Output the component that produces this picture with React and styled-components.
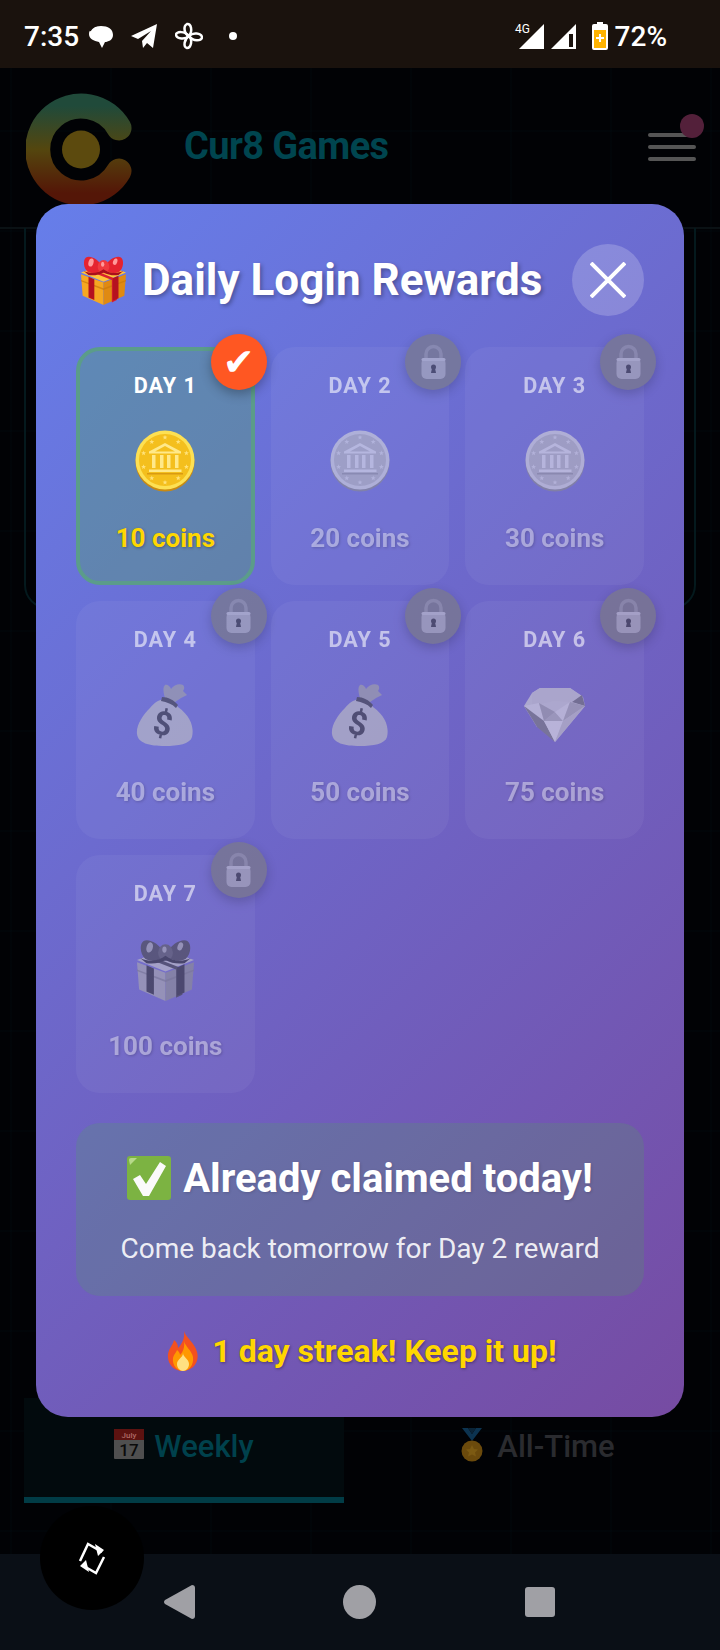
import React from 'react';
import styled, { createGlobalStyle } from 'styled-components';

const GlobalStyle = createGlobalStyle`
  html, body { margin: 0; padding: 0; background: #010204; }
  body { font-family: Roboto, "Liberation Sans", sans-serif; }
`;

const Screen = styled.div`
  position: relative;
  width: 720px;
  height: 1650px;
  overflow: hidden;
  display: flex;
  flex-direction: column;
  background-color: #010205;
  background-image:
    linear-gradient(rgba(0, 229, 255, 0.012) 2px, transparent 2px),
    linear-gradient(90deg, rgba(0, 229, 255, 0.012) 2px, transparent 2px);
  background-size: 100px 100px;
  background-position: 10px 30px;
`;

const StatusBar = styled.div`
  height: 68px;
  flex: none;
  box-sizing: border-box;
  display: flex;
  align-items: center;
  justify-content: space-between;
  padding: 4px 53px 0 24px;
  background: #1a120d;
  color: #fff;
  font-size: 28px;
  font-weight: 500;
`;

const StatusGroup = styled.div`
  display: flex;
  align-items: center;
`;

const Time = styled.span`
  width: 64px;
`;

const StatusIcon = styled.svg`
  display: block;
  margin-right: ${(p) => p.$gap || 0}px;
`;

const Percent = styled.span`
  margin-left: 7px;
`;

const NetworkBadge = styled.span`
  position: absolute;
  top: 22px;
  left: 515px;
  font-size: 12px;
  font-weight: 400;
`;

const Header = styled.header`
  height: 161px;
  flex: none;
  box-sizing: border-box;
  display: flex;
  align-items: center;
  padding: 0 24px 0 26px;
  border-bottom: 2px solid #0a1114;
`;

const Brand = styled.div`
  margin: -4px 0 0 46px;
  flex: 1;
  color: #00454f;
  font-size: 38px;
  font-weight: 700;
  letter-spacing: -0.6px;
`;

const Burger = styled.div`
  position: relative;
  width: 48px;
  display: flex;
  flex-direction: column;
  gap: 8px;
  margin-top: -2px;

  span {
    height: 4px;
    border-radius: 2px;
    background: #555;
  }
`;

const RedDot = styled.i`
  position: absolute;
  top: -19px;
  right: -8px;
  width: 24px;
  height: 24px;
  border-radius: 50%;
  background: #53203a;
`;

const HeroPanel = styled.div`
  height: 379px;
  flex: none;
  margin: -1px 24px 0;
  border: 2px solid #04191d;
  border-top: none;
  border-radius: 0 0 24px 24px;
`;

const Tabs = styled.div`
  margin: auto 24px 51px;
  display: grid;
  grid-template-columns: 320px 320px;
  gap: 32px;
  height: 105px;
`;

const Tab = styled.div`
  box-sizing: border-box;
  display: flex;
  align-items: flex-start;
  justify-content: center;
  gap: 10px;
  padding-top: 30px;
  font-size: 31px;
  font-weight: 500;
  color: ${(p) => (p.$active ? '#00414c' : '#2a2b2f')};
  background: ${(p) => (p.$active ? '#020a0d' : 'transparent')};
  border-bottom: ${(p) => (p.$active ? '6px solid #013c46' : 'none')};
`;

const NavBar = styled.nav`
  height: 96px;
  flex: none;
  display: grid;
  grid-template-columns: 164px 31px 148px 33px 149px 30px;
  align-items: center;
  background: #0a0f16;

  svg { grid-row: 1; }
`;

const FloatingButton = styled.button`
  position: absolute;
  left: 40px;
  top: 1506px;
  width: 104px;
  height: 104px;
  padding: 0;
  border: none;
  border-radius: 50%;
  background: #000;
  display: flex;
  align-items: center;
  justify-content: center;
`;

const Modal = styled.section`
  position: absolute;
  left: 36px;
  top: 204px;
  width: 648px;
  height: 1213px;
  box-sizing: border-box;
  padding: 40px;
  border-radius: 32px;
  background: linear-gradient(135deg, #667eea 0%, #764ba2 100%);
  color: #fff;
`;

const ModalHeader = styled.div`
  display: flex;
  align-items: center;
  justify-content: space-between;
  height: 72px;
  margin-bottom: 31px;
`;

const Title = styled.h2`
  margin: 0;
  display: flex;
  align-items: center;
  gap: 16px;
  padding-left: 5px;
  font-size: 44px;
  font-weight: 700;
  white-space: nowrap;
  text-shadow: 2px 2px 4px rgba(0, 0, 0, 0.3);
`;

const CloseButton = styled.button`
  width: 72px;
  height: 72px;
  padding: 0;
  border: none;
  border-radius: 50%;
  background: rgba(255, 255, 255, 0.2);
  display: flex;
  align-items: center;
  justify-content: center;
  flex: none;
`;

const Grid = styled.div`
  display: grid;
  grid-template-columns: repeat(3, 1fr);
  grid-auto-rows: 238px;
  gap: 16px;
`;

const Card = styled.div`
  position: relative;
  box-sizing: border-box;
  display: flex;
  flex-direction: column;
  align-items: center;
  padding-top: 22px;
  border: 4px solid ${(p) => (p.$claimed ? '#5b9c8a' : 'transparent')};
  border-radius: 24px;
  background: ${(p) => (p.$claimed ? 'rgba(76, 175, 80, 0.3)' : 'rgba(255, 255, 255, 0.08)')};
  opacity: ${(p) => (p.$claimed ? 1 : 0.6)};
`;

const DayLabel = styled.div`
  height: 26px;
  line-height: 26px;
  font-size: 21.6px;
  font-weight: 700;
  letter-spacing: 1px;
`;

const IconSlot = styled.div`
  height: 72px;
  margin-top: 26px;
  display: flex;
  align-items: center;
  justify-content: center;
  filter: ${(p) => (p.$locked ? 'grayscale(1)' : 'none')};
`;

const Coins = styled.div`
  height: 28px;
  margin-top: 27px;
  line-height: 28px;
  font-size: 26px;
  font-weight: 700;
  color: ${(p) => (p.$claimed ? '#ffd700' : 'rgba(255, 255, 255, 0.72)')};
  text-shadow: 1px 1px 3px rgba(0, 0, 0, 0.3);
`;

const Badge = styled.div`
  position: absolute;
  top: -17px;
  right: -16px;
  width: 56px;
  height: 56px;
  border-radius: 50%;
  display: flex;
  align-items: center;
  justify-content: center;
  background: ${(p) => (p.$claimed ? '#ff5722' : '#7d7d7d')};
  box-shadow: 0 4px 12px rgba(0, 0, 0, 0.3);
  color: #fff;
  font-family: "DejaVu Sans", sans-serif;
  font-size: 38px;
  font-weight: 700;
`;

const LockWrap = styled.span`
  display: flex;
  filter: grayscale(1);
  opacity: 0.75;
`;

const StatusBox = styled.div`
  box-sizing: border-box;
  height: 173px;
  margin-top: 30px;
  border-radius: 24px;
  background: rgba(76, 175, 80, 0.2);
  display: flex;
  flex-direction: column;
  align-items: center;
  padding-top: 27px;
`;

const StatusTitle = styled.div`
  display: flex;
  align-items: center;
  gap: 12px;
  height: 56px;
  font-size: 40px;
  font-weight: 700;
  text-shadow: 1px 1px 3px rgba(0, 0, 0, 0.15);
`;

const StatusText = styled.div`
  margin-top: 26px;
  font-size: 28px;
  line-height: 34px;
  color: rgba(255, 255, 255, 0.9);
`;

const Streak = styled.div`
  margin-top: 33px;
  display: flex;
  align-items: center;
  justify-content: center;
  gap: 13px;
  height: 44px;
  padding-left: 4px;
  font-size: 32px;
  font-weight: 700;
  color: #ffd700;
  text-shadow: 1px 1px 3px rgba(0, 0, 0, 0.35);
`;

function GiftIcon({ width = 57, height = 63 }) {
  return (
    <svg width={width} height={height} viewBox="5 1 54 60" preserveAspectRatio="none">
      <path d="M5 24 32 34v27L7 50z" fill="#f6a821" />
      <path d="M59 24 32 34v27l25-11z" fill="#e08a12" />
      <path d="M5 22 32 12l27 10-27 11z" fill="#ffc53d" />
      <path d="M5 31l27 10 27-10v1.500L32 43 5 32.500z" fill="#c9790c" opacity="0.7" />
      <path d="M14 20l6-1 28 11v25l-6 3V31z" fill="#d9202e" />
      <path d="M14 27l7 3v25l-7-3z" fill="#b5121f" />
      <path d="M50 26l-7 3v27l7-3z" fill="#b5121f" />
      <path d="M32 17C26 5 15 1 11 4 7 7 8 17 13 21c6 3 14 2 19-4z" fill="#e5232f" />
      <path d="M32 17c6-12 17-16 21-13 4 3 3 13-2 17-6 3-14 2-19-4z" fill="#e5232f" />
      <ellipse cx="32" cy="15" rx="7" ry="8" fill="#f03a3f" />
      <ellipse cx="17" cy="10" rx="3" ry="5" fill="#ff9a9a" transform="rotate(15 17 10)" />
      <ellipse cx="46" cy="9" rx="2.500" ry="4" fill="#ff9a9a" transform="rotate(20 46 9)" />
      <ellipse cx="31" cy="12" rx="2" ry="3" fill="#ff9a9a" />
      <path d="M8 20c8 4 18 3 24-2 6 5 16 6 24 2l-6 5c-6 1-13 0-18-3-5 3-12 4-18 3z" fill="#a90f1c" />
    </svg>
  );
}

function starPoints(cx, cy, r) {
  const pts = [];
  for (let i = 0; i < 10; i++) {
    const rad = i % 2 === 0 ? r : r * 0.42;
    const a = (i * Math.PI) / 5;
    pts.push(`${cx + rad * Math.sin(a)},${cy - rad * Math.cos(a)}`);
  }
  return pts.join(' ');
}

function CoinIcon() {
  const stars = [0, 36, 72, 108, 144, 180, 216, 252, 288, 324];
  return (
    <svg width="60" height="62" viewBox="0 0 60 62">
      <circle cx="30" cy="32" r="29.500" fill="#c98a12" />
      <circle cx="30" cy="30" r="29.500" fill="#fde053" />
      <circle cx="30" cy="30" r="26" fill="#f4bf1d" />
      {stars.map((a) => (
        <polygon
          key={a}
          points={starPoints(30 + 22.5 * Math.sin((a * Math.PI) / 180), 30 - 22.5 * Math.cos((a * Math.PI) / 180), 2.6)}
          fill="#ffe27a"
        />
      ))}
      <path d="M30 13 46 21.500v2H14v-2z" fill="#ffe98a" />
      <path d="M30 16 40 21.500H20z" fill="#f4bf1d" />
      <path d="M17 25h3.500v13H17zM25 25h3.500v13H25zM32 25h3.500v13H32zM40 25h3.500v13H40z" fill="#ffe98a" />
      <path d="M14 39.500h32.500v2.500H14z" fill="#ffe98a" />
      <path d="M12 43h36v1.500H12z" fill="#d99a12" />
    </svg>
  );
}

function BagIcon() {
  return (
    <svg width="58" height="64" viewBox="0 0 58 64">
      <path d="M30 18c-2-6-4-13-1-16 2-1 5 1 6 4 3-4 8-6 12-4 2 2 1 5 0 6l4 4-6 3-9 6z" fill="#d9a441" />
      <path d="M28 16c8 1 11 4 14 8C56 34 58 46 56 54c-2 7-14 9-27 9C13 63 2 60 1 51c-1-9 6-19 13-26 4-5 8-8 14-9z" fill="#f3c453" />
      <path d="M26 14c6 0 12 3 16 8l-2 3c-4-4-9-6-15-7z" fill="#5c4326" />
      <text x="27" y="52" textAnchor="middle" fontFamily="Roboto, sans-serif" fontWeight="700" fontSize="33" fill="#4d3b2a" transform="rotate(12 27 40)">$</text>
    </svg>
  );
}

function GemIcon() {
  return (
    <svg width="62" height="56" viewBox="0 0 62 56">
      <path d="M16 1h30l13 9 2 9-30 36L0 19l8-13z" fill="#d6d6d6" />
      <path d="M16 1h30l12 8-12 6-16-1-13 3-9 2L8 6z" fill="#d2d2d2" />
      <path d="M48 15l10-7 3 11z" fill="#777" />
      <path d="M0 19l15-3 5 18-7 6z" fill="#e4e4e4" />
      <path d="M0 19l13 21 18 15L20 34z" fill="#7f7f7f" />
      <path d="M20 34l11-9 8 9z" fill="#b8b8b8" />
      <path d="M15 16l16 9-11 9z" fill="#a9a9a9" />
      <path d="M31 25l15-10-7 19z" fill="#e4e4e4" />
      <path d="M46 15l15 4-22 15z" fill="#b2b2b2" />
      <path d="M20 34h19l-8 21z" fill="#e9e9e9" />
      <path d="M39 34l22-15-30 36z" fill="#c9c9c9" />
    </svg>
  );
}

function LockIcon() {
  return (
    <svg width="25" height="36" viewBox="0 0 25 36">
      <path d="M5 17V10a7.500 7.500 0 0 1 15 0v7" fill="none" stroke="#c9a43a" strokeWidth="3.500" />
      <rect x="0.500" y="14" width="24" height="21" rx="5" fill="#f2c744" />
      <rect x="0.500" y="14" width="24" height="3" rx="1.500" fill="#fbe28a" />
      <circle cx="12.500" cy="23" r="2.500" fill="#222" />
      <path d="M11 24h3l1 5h-5z" fill="#222" />
    </svg>
  );
}

function CheckSquare() {
  return (
    <svg width="44" height="44" viewBox="0 0 44 44">
      <rect x="0" y="0" width="44" height="44" rx="3" fill="#7cb342" />
      <path d="M2 4q0-2 2-2h6L3 9z" fill="#b7d98a" />
      <path d="M6 23l7-4 6 9L33 6l6 4-17 30h-6z" fill="#fafafa" />
    </svg>
  );
}

function FireIcon() {
  return (
    <svg width="32" height="40" viewBox="0 0 32 40">
      <path d="M17 0c2 7 11 12 13 21 3 11-5 19-14 19S0 33 1 23c1-6 5-9 6-14 3 2 4 5 4 8 4-4 7-10 6-17z" fill="#f4511e" />
      <path d="M17 10c1 5 8 10 9 16 1 8-4 14-10 14S5 34 6 27c1-4 3-5 4-8 2 2 3 3 3 5 3-3 5-8 4-14z" fill="#ff9800" />
      <path d="M16 22c0 4 6 6 6 11 0 4-3 7-6 7s-6-3-6-7c0-5 6-6 6-11z" fill="#ffe082" />
    </svg>
  );
}

function CalendarIcon() {
  return (
    <svg width="30" height="31" viewBox="0 0 30 31">
      <rect x="0" y="1" width="30" height="30" rx="1" fill="#4f4f4f" />
      <rect x="0" y="1" width="30" height="11" fill="#5c1210" />
      <text x="15" y="9.500" textAnchor="middle" fontFamily="Roboto, sans-serif" fontSize="8" fill="#b06a66">July</text>
      <text x="15" y="28" textAnchor="middle" fontFamily="Roboto, sans-serif" fontWeight="500" fontSize="17" fill="#0b0b0b">17</text>
    </svg>
  );
}

function MedalIcon() {
  return (
    <svg width="30" height="34" viewBox="-4 0 30 34">
      <path d="M1 0h6l4 6 4-6h6l-10 13z" fill="#0c3350" />
      <path d="M7 0h8l-4 6z" fill="#0a2438" />
      <circle cx="11" cy="23" r="10.500" fill="#6b4a0c" />
      <path d="M11 17l2 4 4 .5-3 3 1 4-4-2-4 2 1-4-3-3 4-.5z" fill="#7c5a12" />
    </svg>
  );
}

function CurLogo() {
  return (
    <svg width="112" height="120" viewBox="0 0 112 120" style={{ flex: 'none', marginTop: 10 }}>
      <defs>
        <linearGradient id="logoRing" x1="0" y1="0" x2="0" y2="1">
          <stop offset="0" stopColor="#204a3a" />
          <stop offset="0.5" stopColor="#54460e" />
          <stop offset="1" stopColor="#541607" />
        </linearGradient>
      </defs>
      <path d="M93 35A43.500 43.500 0 1 0 93 78" fill="none" stroke="url(#logoRing)" strokeWidth="25" strokeLinecap="round" />
      <circle cx="55" cy="56.500" r="19" fill="#5c4a0e" />
    </svg>
  );
}

const rewards = [
  { day: 1, coins: 10, Icon: CoinIcon, claimed: true },
  { day: 2, coins: 20, Icon: CoinIcon },
  { day: 3, coins: 30, Icon: CoinIcon },
  { day: 4, coins: 40, Icon: BagIcon },
  { day: 5, coins: 50, Icon: BagIcon },
  { day: 6, coins: 75, Icon: GemIcon },
  { day: 7, coins: 100, Icon: GiftIcon },
];

export default function App() {
  return (
    <Screen>
      <GlobalStyle />
      <StatusBar>
        <StatusGroup>
          <Time>7:35</Time>
          <StatusIcon $gap={16} width="26" height="26" viewBox="0 0 26 26">
            <path d="M13 3c7 0 12 3 12 9 0 5-5 7-8 7l-3 6-3-6C6 18 1 16 1 11 1 6 6 3 13 3z" fill="#fff" />
            <path d="M2 8c2-4 6-6 11-6" fill="none" stroke="#1a120d" strokeWidth="1.500" />
          </StatusIcon>
          <StatusIcon $gap={17} width="28" height="26" viewBox="0 0 28 26">
            <path d="M27 1 1 13l7 3 13-8-9 10 1 7 4-5 6 5z" fill="#fff" />
          </StatusIcon>
          <StatusIcon $gap={26} width="28" height="28" viewBox="0 0 28 28">
            <g fill="none" stroke="#fff" strokeWidth="2.500">
              <path d="M14 14C9 12 8 4 12 2c4-1 6 7 2 12z" />
              <path d="M14 14c4-4 12-3 13 1 0 4-9 5-13-1z" />
              <path d="M14 14c4 4 2 12-2 12-4-1-3-9 2-12z" />
              <path d="M14 14C10 18 2 17 1 13c0-4 9-4 13 1z" />
            </g>
          </StatusIcon>
          <StatusIcon width="8" height="8" viewBox="0 0 8 8">
            <circle cx="4" cy="4" r="4" fill="#fff" />
          </StatusIcon>
        </StatusGroup>
        <NetworkBadge>4G</NetworkBadge>
        <StatusGroup>
          <StatusIcon $gap={7} width="25" height="25" viewBox="0 0 25 25">
            <path d="M25 0v25H0z" fill="#fff" />
          </StatusIcon>
          <StatusIcon $gap={16} width="25" height="25" viewBox="0 0 25 25">
            <path d="M25 0v25H0z" fill="#fff" />
            <path d="M18 10h4v13h-4z" fill="#1a120d" />
          </StatusIcon>
          <StatusIcon width="16" height="28" viewBox="0 0 16 28">
            <path d="M5 0h6v2h3q2 0 2 2v22q0 2-2 2H2q-2 0-2-2V4q0-2 2-2h3z" fill="#fff" />
            <path d="M2 8h12v18H2z" fill="#ffb300" />
            <path d="M7 12h2v3h3v2H9v3H7v-3H4v-2h3z" fill="#fff" />
          </StatusIcon>
          <Percent>72%</Percent>
        </StatusGroup>
      </StatusBar>

      <Header>
        <CurLogo />
        <Brand>Cur8 Games</Brand>
        <Burger>
          <RedDot />
          <span />
          <span />
          <span />
        </Burger>
      </Header>
      <HeroPanel />

      <Tabs>
        <Tab $active>
          <CalendarIcon />
          <span>Weekly</span>
        </Tab>
        <Tab>
          <MedalIcon />
          <span>All-Time</span>
        </Tab>
      </Tabs>

      <NavBar>
        <svg style={{ gridColumn: 2 }} width="31" height="34" viewBox="0 0 31 34">
          <path d="M28 0q3 0 3 3v28q0 3-3 3L1 19q-2-2 0-4z" fill="#a0a0a5" />
        </svg>
        <svg style={{ gridColumn: 4 }} width="33" height="34" viewBox="0 0 33 34">
          <ellipse cx="16.500" cy="17" rx="16.500" ry="17" fill="#a0a0a5" />
        </svg>
        <svg style={{ gridColumn: 6 }} width="30" height="30" viewBox="0 0 30 30">
          <rect width="30" height="30" rx="3" fill="#a0a0a5" />
        </svg>
      </NavBar>

      <FloatingButton aria-label="Rotate">
        <svg width="30" height="34" viewBox="0 0 30 34">
          <g fill="none" stroke="#fff" strokeWidth="2.500">
            <path d="M3 20 11 3l14 8" />
            <path d="M27 16 19 32 5 24" />
          </g>
          <path d="M18 3l9 6-6 6zM12 31l-9-6 6-6z" fill="#fff" />
        </svg>
      </FloatingButton>

      <Modal>
        <ModalHeader>
          <Title>
            <GiftIcon width={45} height={50} />
            Daily Login Rewards
          </Title>
          <CloseButton aria-label="Close">
            <svg width="36" height="36" viewBox="0 0 36 36">
              <path d="M1 1l34 34M35 1 1 35" stroke="#fff" strokeWidth="4" />
            </svg>
          </CloseButton>
        </ModalHeader>

        <Grid>
          {rewards.map(({ day, coins, Icon, claimed }) => (
            <Card key={day} $claimed={claimed}>
              <DayLabel>DAY {day}</DayLabel>
              <IconSlot $locked={!claimed}>
                <Icon />
              </IconSlot>
              <Coins $claimed={claimed}>{coins} coins</Coins>
              <Badge $claimed={claimed}>
                {claimed ? '✔' : (
                  <LockWrap>
                    <LockIcon />
                  </LockWrap>
                )}
              </Badge>
            </Card>
          ))}
        </Grid>

        <StatusBox>
          <StatusTitle>
            <CheckSquare />
            Already claimed today!
          </StatusTitle>
          <StatusText>Come back tomorrow for Day 2 reward</StatusText>
        </StatusBox>

        <Streak>
          <FireIcon />
          1 day streak! Keep it up!
        </Streak>
      </Modal>
    </Screen>
  );
}
